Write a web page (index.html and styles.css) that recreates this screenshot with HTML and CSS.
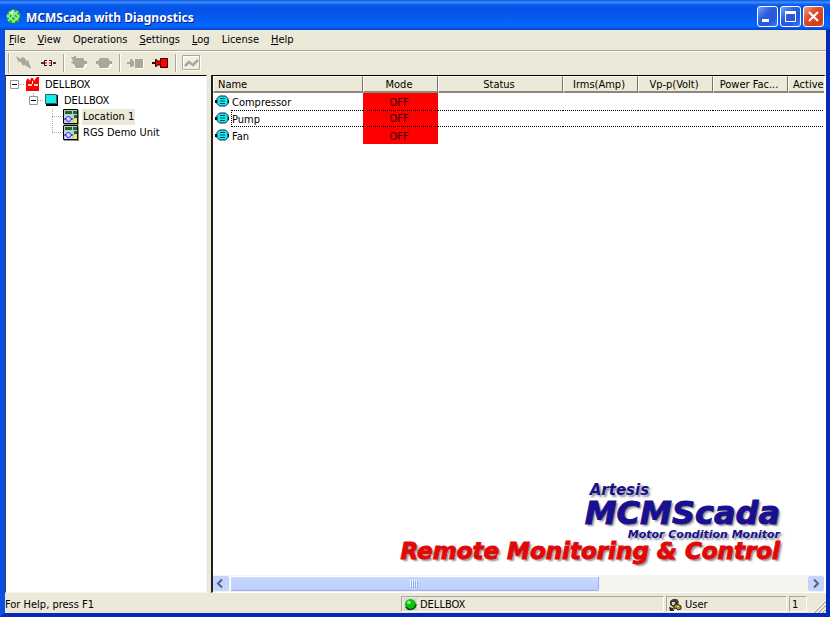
FILE: index.html
```html
<!DOCTYPE html>
<html lang="en">
<head>
<meta charset="utf-8">
<title>MCMScada with Diagnostics</title>
<link rel="stylesheet" href="styles.css">
</head>
<body>
<svg class="defs" aria-hidden="true">
  <defs>
    <symbol id="motor" viewBox="0 0 15 13">
      <path d="M0 5h2v3H0zM13 5h1v3h-1z" fill="#000"/>
      <path d="M4.500 1h6l2.500 2.500v5L10.500 11h-6L2 8.500v-5z" fill="#18e8f0" stroke="#002830"/>
      <path d="M5 3.500h5M5 6h5M5 8.500h5" stroke="#004858" fill="none"/>
    </symbol>
    <symbol id="unit" viewBox="0 0 16 16">
      <path d="M.5 .5h14v14H.5z" fill="#c4ccc4" stroke="#000"/>
      <path d="M15 1v15H1" stroke="#222" fill="none"/>
      <path d="M2 2h7v3H2zM10 2h4v3h-4zM11 6h3v3h-3z" fill="#107028"/>
      <path d="M1 6h9v8H1z" fill="#c4cce8"/>
      <path d="M5.500 7l3 3-3 3-3-3z" fill="#dfe6ff" stroke="#1010c0"/>
      <path d="M1 10h2M8 10h2" stroke="#1010c0"/>
      <path d="M11 10h3v4h-3z" fill="#f0ec30"/>
    </symbol>
  </defs>
</svg>
<div class="window">
  <header class="titlebar">
    <svg class="app-icon" width="16" height="16" viewBox="0 0 16 16" aria-hidden="true">
      <circle cx="7.500" cy="7.500" r="7" fill="#27b33c"/>
      <path d="M3 3l10 9M6 1l8 8M1 6l8 8M12 2L2 12M8 1L1 8M14 6l-8 8" stroke="#a0f8a0" stroke-width="1.200"/>
      <path d="M4 3l2-1 2 2-2 2z" fill="#eaffea"/>
      <path d="M14 6a7 7 0 0 1-9 8" stroke="#08702a" fill="none"/>
    </svg>
    <h1>MCMScada with Diagnostics</h1>
    <div class="win-buttons">
      <button type="button" aria-label="Minimize"><svg width="19" height="19"><path d="M4 12h7v3H4z" fill="#fff"/></svg></button>
      <button type="button" aria-label="Maximize"><svg width="19" height="19"><path d="M4.500 5v9.500h10V5" fill="none" stroke="#fff"/><path d="M4 4h11v3H4z" fill="#fff"/></svg></button>
      <button type="button" class="close" aria-label="Close"><svg width="19" height="19"><path d="M5 5l9 9M14 5l-9 9" stroke="#fff" stroke-width="2.200"/></svg></button>
    </div>
  </header>

  <nav class="menubar">
    <button type="button"><u>F</u>ile</button>
    <button type="button"><u>V</u>iew</button>
    <button type="button">Operations</button>
    <button type="button"><u>S</u>ettings</button>
    <button type="button"><u>L</u>og</button>
    <button type="button">License</button>
    <button type="button"><u>H</u>elp</button>
  </nav>

  <div class="toolbar" role="toolbar">
    <button type="button" aria-label="Connect"><svg width="16" height="16"><path d="M2 2l4 3 1-2 2 1 1 4 2-1 4 8-7-4-1 1-3-5-1 2z" fill="#fff"/><path d="M0 1l5 3 1-2 3 1 1 3 2-1 3 8 0 1-7-4-1 1-3-5-1 2z" fill="#aca899"/></svg></button>
    <button type="button" aria-label="Disconnect"><svg width="16" height="16"><path d="M0 8h3M12 8h3" stroke="#000" stroke-width="1.500"/><path d="M6 5.500H3.500v5H6M8 5.500h2.500v5H8" fill="none" stroke="#500000"/><path d="M4 8h2M8 8h2" stroke="#e00000"/></svg></button>
    <span class="sep"></span>
    <button type="button" aria-label="Start motor"><svg width="17" height="16"><path d="M5 4h8l3 3v3l-3 4H6l-2-3z" fill="#fff"/><path d="M0 2h3V1h2v2h7l2 3h2v3h-2l-2 4H5L3 9l-3-1 2-2z" fill="#aca899"/></svg></button>
    <button type="button" aria-label="Stop motor"><svg width="17" height="16"><path d="M5 4h8l3 3v3l-3 4H5z" fill="#fff"/><path d="M4 3h8l2 3h2v3h-2l-2 4H4L2 9H0V6h2z" fill="#aca899"/></svg></button>
    <span class="sep"></span>
    <button type="button" aria-label="Attach"><svg width="17" height="16"><path d="M10 5h7v9h-7z" fill="#fff"/><path d="M8 4h8v9H8zM3 4h2l1 2h1v5H6l-1 1H3v-3H0V7h3z" fill="#aca899"/></svg></button>
    <button type="button" aria-label="Detach"><svg width="17" height="16"><path d="M8.500 3.500h7v9h-7z" fill="#f00" stroke="#300"/><path d="M3.500 4.500h1l1 1.500h3v4h-3l-1 1.500h-1z" fill="#e00" stroke="#300"/><path d="M0 8h3" stroke="#300" stroke-width="2"/></svg></button>
    <span class="sep"></span>
    <button type="button" aria-label="Trend chart"><svg width="19" height="16"><path d="M1.500 1.500h17v14h-17z" fill="#f2f0e6" stroke="#fff"/><path d="M.5 .5h17v14H.5z" fill="none" stroke="#aca899"/><path d="M3 11l4-4 4 3 5-5" fill="none" stroke="#aca899" stroke-width="2.500"/></svg></button>
  </div>

  <main class="panes">
    <aside class="tree-pane">
      <ul class="tree">
        <li>
          <div class="node">
            <button type="button" class="toggle" aria-label="Collapse"><svg width="15" height="16"><path d="M9 7.500h6" stroke="#aaa" stroke-dasharray="1 1"/><path d="M.5 3.500h8v8h-8z" fill="#fff" stroke="#8c9a9c"/><path d="M2 7.500h5" stroke="#000"/></svg></button>
            <svg class="icon" width="16" height="16"><path d="M1 14V4l2-3 2 3 1-3h2l1 3 2-3 1-1h2v14z" fill="#f00"/><path d="M3 7h4v2H3zM9 7h4v2H9z" fill="#ffd8d8"/><path d="M7 4h1v3H7z" fill="#fff"/></svg>
            <span class="label">DELLBOX</span>
          </div>
          <ul>
            <li>
              <div class="node">
                <button type="button" class="toggle" aria-label="Collapse"><svg width="15" height="16"><path d="M4.500 0v3M9 7.500h6" stroke="#aaa" stroke-dasharray="1 1"/><path d="M.5 3.500h8v8h-8z" fill="#fff" stroke="#8c9a9c"/><path d="M2 7.500h5" stroke="#000"/></svg></button>
                <svg class="icon" width="16" height="16"><path d="M1.500 1.500h11v9h-11z" fill="#0ef0f0" stroke="#405858"/><path d="M13.500 2v10" stroke="#000"/><path d="M2 11h12v2H2z" fill="#000"/></svg>
                <span class="label">DELLBOX</span>
              </div>
              <ul>
                <li class="node">
                  <svg class="slot" width="15" height="16"><path d="M4.500 0v16M4 7.500h11" stroke="#aaa" stroke-dasharray="1 1"/></svg>
                  <svg class="icon" width="16" height="16"><use href="#unit"/></svg>
                  <span class="label selected">Location 1</span>
                </li>
                <li class="node">
                  <svg class="slot" width="15" height="16"><path d="M4.500 0v8M4 7.500h11" stroke="#aaa" stroke-dasharray="1 1"/></svg>
                  <svg class="icon" width="16" height="16"><use href="#unit"/></svg>
                  <span class="label">RGS Demo Unit</span>
                </li>
              </ul>
            </li>
          </ul>
        </li>
      </ul>
    </aside>

    <section class="list-pane">
      <div class="list-view">
        <table>
          <colgroup><col class="w150"><col class="w75"><col class="w125"><col class="w75"><col class="w75"><col class="w75"><col class="w75"></colgroup>
          <thead>
            <tr><th class="left">Name</th><th>Mode</th><th>Status</th><th>Irms(Amp)</th><th>Vp-p(Volt)</th><th>Power Fac...</th><th class="left">Active</th></tr>
          </thead>
          <tbody>
            <tr><td><div class="name"><svg width="15" height="13"><use href="#motor"/></svg><span>Compressor</span></div></td><td class="off">OFF</td><td></td><td></td><td></td><td></td><td></td></tr>
            <tr class="focused"><td><div class="name"><svg width="15" height="13"><use href="#motor"/></svg><span>Pump</span></div></td><td class="off">OFF</td><td></td><td></td><td></td><td></td><td></td></tr>
            <tr><td><div class="name"><svg width="15" height="13"><use href="#motor"/></svg><span>Fan</span></div></td><td class="off">OFF</td><td></td><td></td><td></td><td></td><td></td></tr>
          </tbody>
        </table>
        <div class="brand">
          <div class="brand-top">
            <span class="maker">Artesis</span>
            <span class="product">MCMScada</span>
          </div>
          <span class="tagline">Motor Condition Monitor</span>
          <span class="slogan">Remote Monitoring &amp; Control</span>
        </div>
      </div>
      <div class="scrollbar">
        <button type="button" aria-label="Scroll left"><svg width="15" height="15"><path d="M9 3.500l-4 4 4 4" fill="none" stroke="#4d6185" stroke-width="2"/></svg></button>
        <div class="track"><div class="thumb"><svg width="9" height="8"><path d="M.5 0v7M2.500 0v7M4.500 0v7M6.500 0v7" stroke="#eef4fe"/><path d="M1.500 1v7M3.500 1v7M5.500 1v7M7.500 1v7" stroke="#8cb0f8"/></svg></div></div>
        <button type="button" aria-label="Scroll right"><svg width="15" height="15"><path d="M6 3.500l4 4-4 4" fill="none" stroke="#4d6185" stroke-width="2"/></svg></button>
      </div>
    </section>
  </main>

  <footer class="statusbar">
    <span class="message">For Help, press F1</span>
    <span class="cell server"><svg width="13" height="13"><path d="M0 0h13v13H0z" fill="#d8d8d0"/><circle cx="6.500" cy="6.500" r="5.500" fill="#10c010"/><path d="M12 6a5.500 5.500 0 0 1-10 3" fill="none" stroke="#065006" stroke-width="1.500"/><circle cx="5" cy="4.500" r="1.800" fill="#7cff7c"/></svg>DELLBOX</span>
    <span class="cell user"><svg width="13" height="13"><path d="M1 3l3-2h4l2 3-2 4-4 1-3-2z" fill="#403c30"/><path d="M3 4h3v3H3z" fill="#d8d4c0"/><path d="M5 7l3-1 4 2v3l-3 1-2-2-2 1z" fill="#a89028" stroke="#302808"/><path d="M8 8h2v1H8z" fill="#f8e860"/><path d="M0 9l4 1 1 3H1z" fill="#282418"/></svg>User</span>
    <span class="cell count">1</span>
    <svg class="grip" width="13" height="13"><path d="M1 13L13 1M5 13l8-8M9 13l4-4" stroke="#aca899" stroke-width="1.500"/><path d="M0 13L13 0M4 13l9-9M8 13l5-5" stroke="#fff"/></svg>
  </footer>
</div>
</body>
</html>
```
FILE: styles.css
```css
*, *::before { box-sizing: border-box; }

body {
  margin: 0;
  background: #0a246a;
  color: #000;
  font: 11px/16px "DejaVu Sans Condensed", Tahoma, sans-serif;
}

button {
  margin: 0;
  padding: 0;
  border: 0;
  background: none;
  color: inherit;
  font: inherit;
}

svg { display: block; flex: none; }
ul { margin: 0; padding: 0; list-style: none; }
.defs { position: absolute; width: 0; height: 0; }

.window {
  display: flex;
  flex-direction: column;
  min-height: 100vh;
  border: solid;
  border-width: 0 4px 4px 5px;
  border-color: #0a3fdc #0828b8 #0828b8 #0a4fe4;
  background: #ece9d8;
}

.titlebar {
  display: flex;
  align-items: center;
  height: 30px;
  margin: 0 -4px 0 -5px;
  padding: 3px 6px 0;
  background: linear-gradient(#0a50d8 0, #3c90ff 2px, #0a5cee 5px, #0454e4 9px, #0458ee 16px, #0466fe 24px, #0460f8 27px, #0244c8 30px);
}

.titlebar h1 {
  flex: 1;
  margin: 0 0 0 4px;
  padding-top: 2px;
  color: #fff;
  font: bold 12px/18px "Noto Sans", "Trebuchet MS", sans-serif;
  text-shadow: 1px 1px 0 #0a1883;
}

.win-buttons { display: flex; gap: 2px; }

.win-buttons button {
  width: 21px;
  height: 21px;
  border: 1px solid #fff;
  border-radius: 3px;
  background: linear-gradient(135deg, #7aa2f8, #2c5ce0 40%, #2858d8 70%, #3a78f4);
}

.win-buttons .close { background: linear-gradient(135deg, #f0a088, #e04c28 40%, #d03c14 80%, #e05428); }

.menubar {
  display: flex;
  gap: 12px;
  height: 20px;
  padding: 0 4px;
}

.toolbar {
  display: flex;
  align-items: center;
  height: 25px;
  padding: 0 3px;
  border-top: 1px solid #aca899;
  box-shadow: inset 0 1px #fff;
}

.toolbar::before {
  width: 3px;
  height: 20px;
  border-left: 1px solid #aca899;
  box-shadow: inset 1px 0 #fff;
  content: "";
}

.toolbar button {
  display: flex;
  align-items: center;
  justify-content: center;
  width: 25px;
  height: 22px;
}

.sep {
  width: 6px;
  height: 18px;
  padding-left: 2px;
}

.sep::before {
  display: block;
  width: 2px;
  height: 18px;
  border: solid;
  border-width: 0 1px;
  border-color: #fff #fff #fff #aca899;
  content: "";
}

.panes { display: flex; flex: 1; gap: 4px; }

.tree-pane {
  width: 202px;
  padding: 1px 0 0 4px;
  border: 1px solid #000;
  border-color: #000 #f6f4ec #f6f4ec #404040;
  background: #fff;
}

.tree ul { padding-left: 19px; }
.node { display: flex; height: 16px; }
.toggle { width: 15px; height: 16px; }
.label { height: 16px; margin-left: 3px; padding: 0 1px; white-space: nowrap; }
.selected { background: #ece9d8; }

.list-pane {
  display: flex;
  flex: 1;
  flex-direction: column;
  min-width: 0;
  border: solid;
  border-width: 1px 2px 1px 2px;
  border-color: #000 #fff #fff #202020;
  background: #fff;
}

.list-view {
  display: flex;
  flex: 1;
  flex-direction: column;
  overflow: hidden;
}

table {
  width: 650px;
  border-collapse: separate;
  border-spacing: 0;
  table-layout: fixed;
}

.w150 { width: 150px; }
.w125 { width: 125px; }
.w75 { width: 75px; }

th {
  height: 17px;
  padding: 2px 3px 0 0;
  border: solid;
  border-width: 1px 1px 2px;
  border-color: #f8f6ec #77756a #8c897c #fff;
  background: #ece9d8;
  font-weight: normal;
  line-height: 12px;
  white-space: nowrap;
}

th.left { padding-left: 4px; text-align: left; }

td { height: 17px; padding: 0; line-height: 15px; }
.name { display: flex; align-items: center; padding-left: 2px; }
.name span { flex: 1; height: 17px; margin-left: 1px; padding: 1px 0 0 1px; line-height: 17px; }
.off { padding: 2px 3px 0 0; background: #f00; color: #300; text-align: center; }
.focused td { border: dotted #000; border-width: 1px 0; }
.focused .off { padding-top: 0; }
.focused td:first-child { border: 0; }
.focused .name span { border: 1px dotted #000; border-right: 0; padding-left: 0; line-height: 15px; }

.brand {
  display: flex;
  flex-direction: column;
  align-items: flex-end;
  margin: auto 44px 14px 0;
  color: #181090;
  font-family: "DejaVu Sans", "Arial Black", sans-serif;
  font-style: italic;
  font-weight: bold;
  text-shadow: 2px 2px 2px #909090;
  white-space: nowrap;
}

.brand-top { display: flex; flex-direction: column; }
.maker { padding-left: 5px; font-size: 15px; line-height: 16px; }
.product { font-size: 32px; line-height: 30px; -webkit-text-stroke: 1px #181090; }
.tagline { font-size: 11px; line-height: 13px; }
.slogan { color: #e00808; font-size: 23px; line-height: 20px; -webkit-text-stroke: 1px #e00808; }

.scrollbar {
  display: flex;
  gap: 1px;
  height: 17px;
  padding: 1px 0;
  background: #f4f3ee;
}

.scrollbar button {
  width: 16px;
  height: 15px;
  border-radius: 2px;
  background: #c4d5fd;
}

.track { display: flex; flex: 1; }

.thumb {
  display: flex;
  align-items: center;
  justify-content: center;
  width: 64%;
  border: 1px solid #98b0e8;
  border-color: #fff #98b0e8 #98b0e8 #fff;
  border-radius: 2px;
  background: linear-gradient(#c8d8fe, #bccffc);
}

.statusbar {
  display: flex;
  align-items: center;
  gap: 2px;
  height: 20px;
  padding: 2px 0 0;
  line-height: 18px;
}

.message { flex: 1; padding-top: 2px; }

.cell {
  display: flex;
  align-items: center;
  gap: 3px;
  height: 16px;
  padding: 1px 0 0 2px;
  border: 1px solid #aca899;
  border-color: #aca899 #fff #fff #aca899;
}

.server { width: 263px; }
.user { width: 121px; }
.count { width: 18px; }
.grip { align-self: flex-end; margin-left: 4px; }
```
